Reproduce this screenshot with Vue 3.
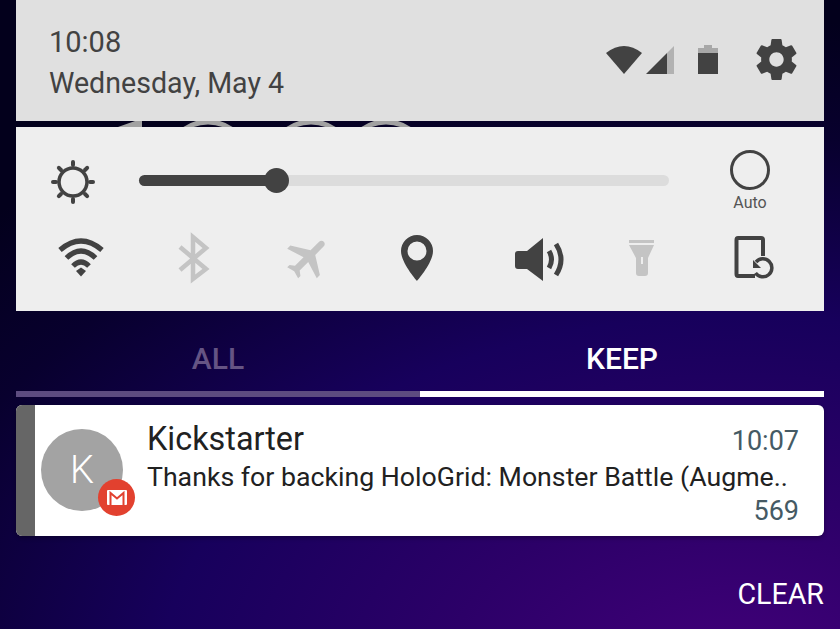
<template>
  <div class="screen">
    <header class="status">
      <div class="clock">
        <div class="time">10:08</div>
        <div class="date">Wednesday, May 4</div>
      </div>
      <div class="status-icons">
        <svg class="ic-wifi" width="36" height="28" viewBox="0 0 36 28">
          <path d="M0 7 Q18 -7 36 7 L18 28 Z" fill="#424242" />
        </svg>
        <svg class="ic-signal" width="28" height="28" viewBox="0 0 28 28">
          <path d="M0 28 L21 7 V28 Z" fill="#424242" />
          <path d="M21 7 L28 0 V28 H21 Z" fill="#b2b2b2" />
        </svg>
        <svg class="ic-battery" width="20" height="29" viewBox="0 0 20 29">
          <path d="M6 0 H14 V3 H20 V8 H0 V3 H6 Z" fill="#a8a8a8" />
          <rect y="8" width="20" height="21" fill="#424242" />
        </svg>
        <svg class="ic-gear" width="41" height="41" viewBox="2 2 20 20">
          <path fill="#424242" d="M19.43 12.98c.04-.32.07-.64.07-.98s-.03-.66-.07-.98l2.11-1.65c.19-.15.24-.42.12-.64l-2-3.46c-.12-.22-.39-.3-.61-.22l-2.49 1c-.52-.4-1.08-.73-1.69-.98l-.38-2.65C14.46 2.18 14.25 2 14 2h-4c-.25 0-.46.18-.49.42l-.38 2.65c-.61.25-1.17.59-1.69.98l-2.49-1c-.23-.09-.49 0-.61.22l-2 3.46c-.13.22-.07.49.12.64l2.11 1.65c-.04.32-.07.65-.07.98s.03.66.07.98l-2.11 1.65c-.19.15-.24.42-.12.64l2 3.46c.12.22.39.3.61.22l2.49-1c.52.4 1.08.73 1.69.98l.38 2.65c.03.24.24.42.49.42h4c.25 0 .46-.18.49-.42l.38-2.65c.61-.25 1.17-.59 1.69-.98l2.49 1c.23.09.49 0 .61-.22l2-3.46c.12-.22.07-.49-.12-.64l-2.11-1.65zM12 15.5c-1.93 0-3.5-1.57-3.5-3.5s1.57-3.5 3.5-3.5 3.5 1.57 3.5 3.5-1.57 3.5-3.5 3.5z" />
        </svg>
      </div>
    </header>

    <!-- lockscreen clock peeking through the gap -->
    <svg class="peek" width="808" height="6" viewBox="0 0 808 6">
      <path d="M102 6 L119 0 H126 V6 Z" fill="#a2a2a2" />
      <g fill="none" stroke="#a2a2a2" stroke-width="5">
        <ellipse cx="192" cy="31" rx="36" ry="30" />
        <ellipse cx="295" cy="31" rx="36" ry="30" />
        <ellipse cx="370" cy="31" rx="36" ry="30" />
      </g>
    </svg>

    <section class="quick">
      <div class="bright-row">
        <svg class="sun" width="44" height="44" viewBox="0 0 44 44">
          <circle cx="22" cy="22" r="14" fill="none" stroke="#424242" stroke-width="3.5" />
          <g stroke="#424242" stroke-width="4" stroke-linecap="round">
            <path v-for="r in rays" :key="r" d="M22 2 V5" :transform="`rotate(${r} 22 22)`" />
          </g>
        </svg>
        <div class="slider">
          <div class="slider-fill" :style="{ width: brightness + 'px' }"></div>
          <div class="slider-thumb" :style="{ left: brightness - 12 + 'px' }"></div>
        </div>
        <div class="auto">
          <div class="auto-ring"></div>
          <div class="auto-label">Auto</div>
        </div>
      </div>

      <div class="toggles">
        <div class="toggle">
          <svg width="60" height="60" viewBox="0 0 60 60">
            <g fill="none" stroke="#424242" stroke-width="5.2">
              <path d="M9 22 Q30 4 51 22" />
              <path d="M15.5 30 Q30 16 44.5 30" />
              <path d="M22 38 Q30 30 38 38" />
            </g>
            <path d="M25 43 L30 39.5 L35 43 L30 48.5 Z" fill="#424242" />
          </svg>
        </div>
        <div class="toggle">
          <svg width="60" height="60" viewBox="0 0 60 60">
            <path d="M17 19 L43 41 L30 51 V9 L43 20 L17 42" fill="none" stroke="#c4c4c4" stroke-width="4.5" />
          </svg>
        </div>
        <div class="toggle">
          <svg width="60" height="60" viewBox="0 0 60 60">
            <g transform="translate(34 30) rotate(45) scale(2.2) translate(-12 -12)">
              <path fill="#c4c4c4" d="M21 16v-2l-8-5V3.5c0-.83-.67-1.5-1.5-1.5S10 2.67 10 3.5V9l-8 5v2l8-2.5V19l-2 1.5V22l3.5-1 3.5 1v-1.5L13 19v-5.5l8 2.5z" />
            </g>
          </svg>
        </div>
        <div class="toggle">
          <svg width="60" height="60" viewBox="0 0 60 60">
            <path fill="#424242" fill-rule="evenodd" d="M30 7 a16 16 0 0 0 -16 16 c0 12 16 30 16 30 s16 -18 16 -30 a16 16 0 0 0 -16 -16z M30 13.5 a9.5 9.5 0 1 1 0 19 a9.5 9.5 0 1 1 0 -19z" />
          </svg>
        </div>
        <div class="toggle">
          <svg width="60" height="60" viewBox="0 0 60 60">
            <path fill="#424242" d="M44 10 V53 L28 41 H19 q-3 0 -3 -3 V26 q0 -3 3 -3 H28 Z" />
            <g fill="none" stroke="#424242" stroke-width="5">
              <path d="M50 23 Q55 31.5 50 40" />
              <path d="M57 16 Q67 31.5 57 47" />
            </g>
          </svg>
        </div>
        <div class="toggle">
          <svg width="60" height="60" viewBox="0 0 60 60">
            <rect x="18" y="12" width="25" height="3" fill="#c4c4c4" />
            <path fill="#c4c4c4" d="M18 17 H43 L37 30 V45 q0 3 -3 3 H28 q-3 0 -3 -3 V30 Z" />
            <rect x="30" y="29" width="2" height="7" fill="#eeeeee" />
          </svg>
        </div>
        <div class="toggle">
          <svg width="60" height="60" viewBox="0 0 60 60">
            <path d="M32 48 H15 Q13.5 48 13.5 46 V12 Q13.5 10 15 10 H38 Q40 10 40 12 V28" fill="none" stroke="#424242" stroke-width="4" />
            <path d="M33 34 A9 9 0 1 1 32.5 45" fill="none" stroke="#424242" stroke-width="3.5" />
            <path d="M30 32 V40 H38 Z" fill="#424242" />
          </svg>
        </div>
      </div>
    </section>

    <nav class="tabs">
      <div class="tab">ALL</div>
      <div class="tab active">KEEP</div>
    </nav>

    <article class="notif">
      <div class="strip"></div>
      <div class="avatar">
        K
        <div class="badge">
          <svg width="20" height="15" viewBox="0 0 20 15">
            <rect width="20" height="15" rx="1" fill="#fff" />
            <path d="M3.5 15 V3 L10 8.5 L16.5 3 V15" fill="none" stroke="#e2412f" stroke-width="2" />
          </svg>
        </div>
      </div>
      <div class="notif-body">
        <div class="line">
          <span class="title">Kickstarter</span>
          <span class="meta">10:07</span>
        </div>
        <div class="subject">Thanks for backing HoloGrid: Monster Battle (Augme..</div>
        <div class="count meta">569</div>
      </div>
    </article>

    <div class="clear">CLEAR</div>
  </div>
</template>

<script setup>
const rays = [0, 45, 90, 135, 180, 225, 270, 315]
const brightness = 137
</script>

<style>
body {
  margin: 0;
  overflow: hidden;
}
</style>

<style scoped>
.screen {
  width: 840px;
  height: 629px;
  padding: 0 16px;
  box-sizing: border-box;
  overflow: hidden;
  font-family: Roboto, "Liberation Sans", sans-serif;
  background: radial-gradient(ellipse 1050px 660px at 88% 108%, #42007a 0%, #2c0068 28%, #17005c 55%, #08002e 82%, #03001c 100%);
}

.status {
  height: 121px;
  background: #e0e0e0;
  display: flex;
  justify-content: space-between;
  align-items: center;
  padding: 0 27px 0 33px;
  color: #424242;
}
.clock {
  padding-top: 4px;
}
.time {
  font-size: 29px;
  line-height: 40px;
}
.date {
  font-size: 28.6px;
  line-height: 42px;
}
.status-icons {
  display: flex;
  align-items: center;
  margin-bottom: 2px;
}
.status-icons svg {
  display: block;
}
.ic-signal {
  margin-left: 4px;
}
.ic-battery {
  margin-left: 24px;
}
.ic-gear {
  margin-left: 38px;
}

.peek {
  display: block;
}

.quick {
  height: 184px;
  background: #eeeeee;
  box-sizing: border-box;
  padding-top: 22px;
}
.bright-row {
  display: flex;
  align-items: flex-start;
  padding-left: 35px;
  height: 79px;
}
.sun {
  margin-top: 11px;
}
.slider {
  position: relative;
  width: 530px;
  height: 11px;
  margin: 26px 0 0 44px;
  border-radius: 6px;
  background: #dcdcdc;
}
.slider-fill {
  height: 100%;
  border-radius: 6px;
  background: #424242;
}
.slider-thumb {
  position: absolute;
  top: -7px;
  width: 25px;
  height: 25px;
  border-radius: 50%;
  background: #424242;
}
.auto {
  width: 60px;
  margin-left: 51px;
  padding-top: 1px;
  display: flex;
  flex-direction: column;
  align-items: center;
}
.auto-ring {
  width: 34px;
  height: 34px;
  border: 3px solid #424242;
  border-radius: 50%;
}
.auto-label {
  font-size: 16px;
  line-height: 20px;
  margin-top: 3px;
  color: #555;
}

.toggles {
  display: grid;
  grid-template-columns: repeat(7, 112px);
  padding-left: 9px;
}
.toggle {
  display: flex;
  justify-content: center;
}
.toggle svg {
  display: block;
  overflow: visible;
}

.tabs {
  display: flex;
  height: 86px;
}
.tab {
  flex: 1;
  box-sizing: border-box;
  padding-top: 31px;
  text-align: center;
  font-size: 30px;
  line-height: 34px;
  font-weight: 500;
  color: #655484;
  border-bottom: 6px solid #5d4c80;
}
.tab.active {
  color: #fff;
  border-bottom-color: #fff;
}

.notif {
  display: flex;
  height: 131px;
  margin-top: 8px;
  background: #fff;
  border-radius: 6px;
  overflow: hidden;
  box-shadow: 0 2px 4px rgba(0, 0, 0, 0.3);
}
.strip {
  width: 19px;
  background: #666666;
}
.avatar {
  position: relative;
  flex: none;
  width: 82px;
  height: 82px;
  margin: 24px 0 0 6px;
  border-radius: 50%;
  background: #a3a3a3;
  color: #fff;
  font-size: 38px;
  font-weight: 300;
  line-height: 82px;
  text-align: center;
}
.badge {
  position: absolute;
  left: 57px;
  top: 50px;
  width: 37px;
  height: 37px;
  border-radius: 50%;
  background: #e2412f;
  display: flex;
  align-items: center;
  justify-content: center;
}
.badge svg {
  display: block;
}
.notif-body {
  flex: 1;
  margin-left: 24px;
  padding: 15px 25px 0 0;
}
.line {
  display: flex;
  justify-content: space-between;
  align-items: baseline;
  height: 38px;
}
.title {
  font-size: 32.4px;
  line-height: 38px;
  color: #212121;
}
.subject {
  font-size: 26.7px;
  line-height: 38px;
  color: #212121;
  white-space: nowrap;
}
.meta {
  font-size: 27px;
  color: #455a64;
}
.count {
  text-align: right;
  line-height: 30px;
}

.clear {
  margin-top: 44px;
  text-align: right;
  font-size: 28.6px;
  line-height: 28px;
  color: #fff;
}
</style>
